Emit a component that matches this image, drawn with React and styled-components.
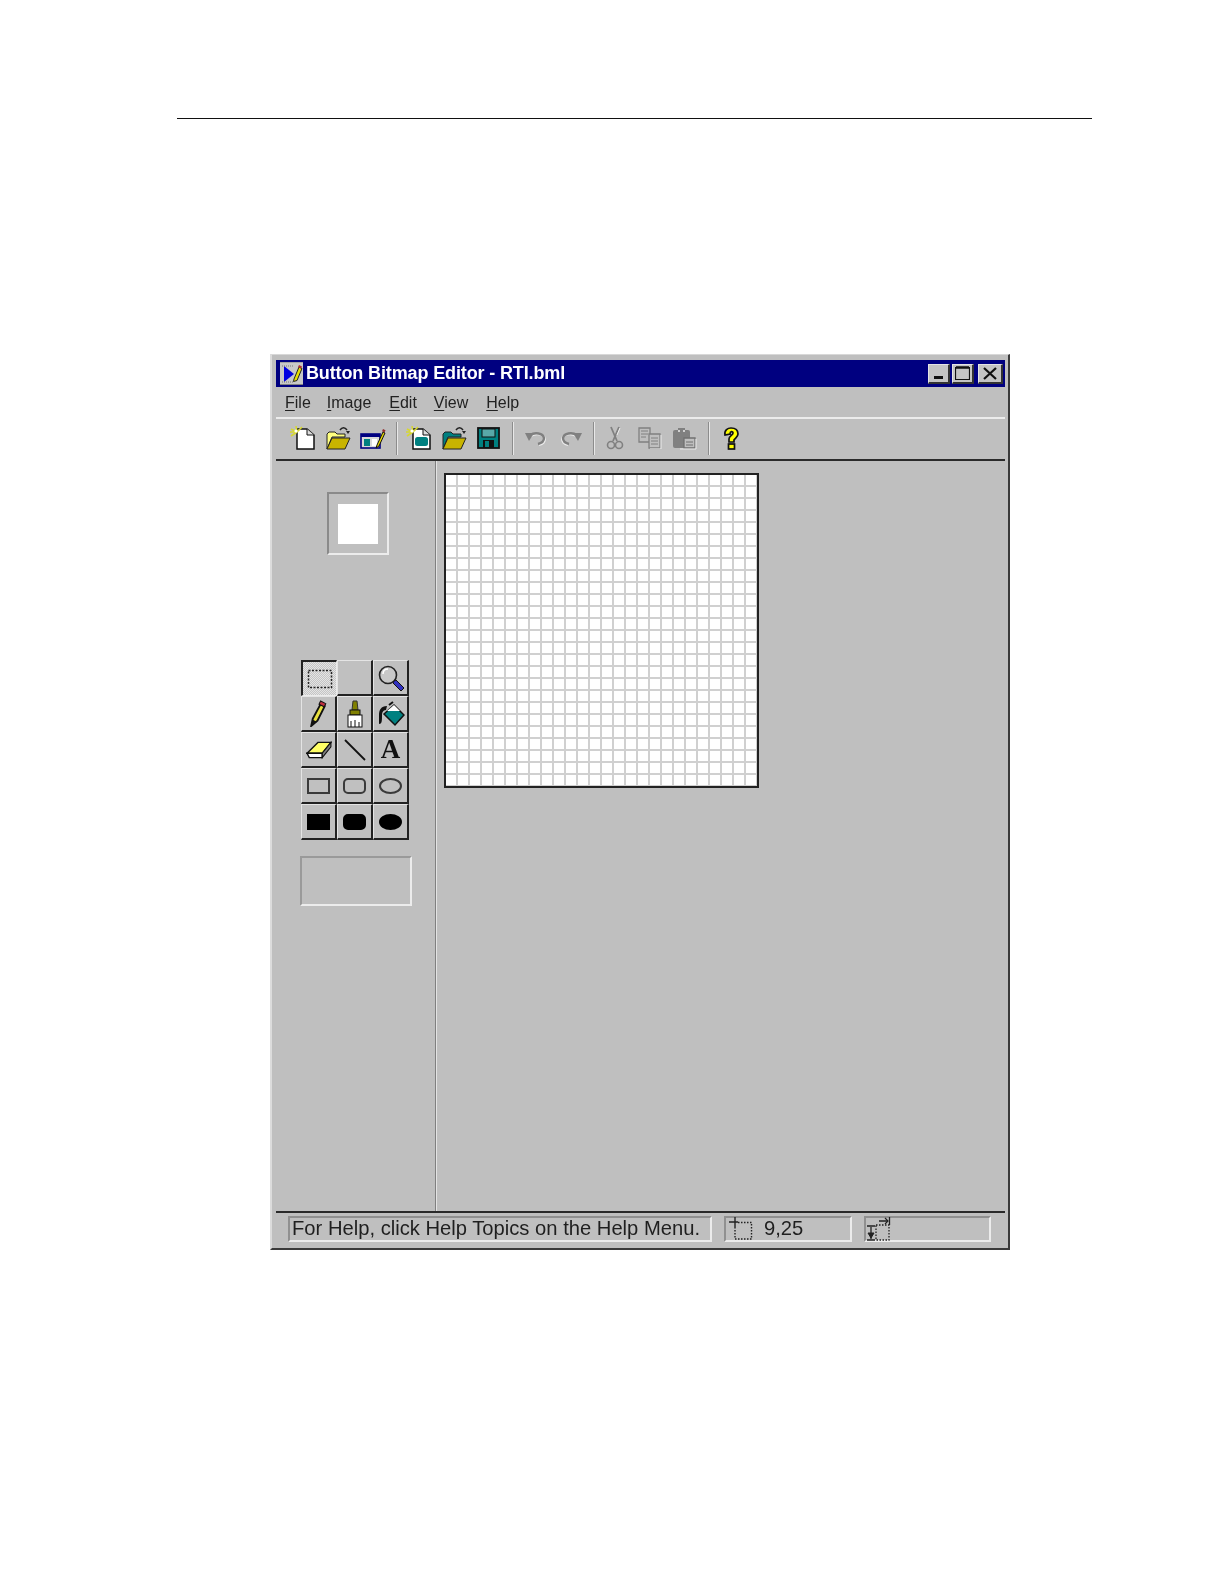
import React from "react";
import styled, { createGlobalStyle } from "styled-components";

const Global = createGlobalStyle`
  html, body { margin: 0; padding: 0; background: #ffffff; }
  body { font-family: "Liberation Sans", Arial, sans-serif; }
`;

const Page = styled.div`
  width: 1224px;
  height: 1584px;
  padding: 118px 0 0 177px;
  box-sizing: border-box;
  background: #fff;
`;
const Rule = styled.div`
  width: 915px;
  height: 1px;
  background: #111;
`;
const Win = styled.div`
  width: 740px;
  height: 896px;
  margin: 235px 0 0 93px;
  box-sizing: border-box;
  background: #bfbfbf;
  padding: 5px 3px 3px 4px;
  border-top: 1px solid #d8d8d8;
  border-left: 2px solid #dcdcdc;
  border-right: 2px solid #3a3a3a;
  border-bottom: 2px solid #3a3a3a;
  display: flex;
  flex-direction: column;
  filter: blur(0.35px);
`;
const TitleBar = styled.div`
  height: 27px;
  flex: none;
  background: #000080;
  display: flex;
  align-items: center;
  padding: 0 2px 0 4px;
  color: #fff;
`;
const TitleText = styled.span`
  font-size: 18px;
  font-weight: 700;
  letter-spacing: -0.13px;
  margin-left: 3px;
  flex: 1;
  white-space: nowrap;
`;
const WinBtn = styled.div`
  width: ${(p) => p.$w || 22}px;
  height: 20px;
  margin-left: ${(p) => p.$ml || 0}px;
  box-sizing: border-box;
  background: #c4c4c4;
  border-top: 1px solid #e4e4e4;
  border-left: 1px solid #e4e4e4;
  border-right: 2px solid #333;
  border-bottom: 2px solid #333;
  display: flex;
  align-items: center;
  justify-content: center;
`;
const MenuBar = styled.div`
  height: 30px;
  flex: none;
  display: flex;
  padding-left: 9px;
  align-items: flex-end;
  font-size: 16px;
  color: #222;
  box-sizing: border-box;
  padding-bottom: 5px;
`;
const MenuItem = styled.span`
  margin-right: ${(p) => p.$mr}px;
  white-space: nowrap;
  & u { text-underline-offset: 2px; }
`;
const Toolbar = styled.div`
  height: 42px;
  flex: none;
  box-sizing: border-box;
  border-top: 2px solid #ececec;
  padding: 0 0 0 10px;
  display: flex;
  align-items: flex-start;
`;
const ToolBtn = styled.div`
  width: 34.7px;
  height: 38px;
  flex: none;
  box-sizing: border-box;
  padding-left: ${(p) => p.$pl || 0}px;
  display: flex;
  align-items: center;
  justify-content: center;
`;
const ToolSep = styled.div`
  width: 2px;
  height: 33px;
  margin: 3px ${(p) => p.$mr ?? 4}px 0 ${(p) => p.$ml ?? 6}px;
  flex: none;
  background: linear-gradient(90deg, #8c8c8c 50%, #e8e8e8 50%);
`;
const Dark = styled.div`
  height: 2px;
  flex: none;
  background: #2a2a2a;
`;
const Main = styled.div`
  flex: 1;
  min-height: 0;
  display: flex;
`;
const Side = styled.div`
  width: 159px;
  flex: none;
  box-sizing: border-box;
  display: flex;
  flex-direction: column;
  align-items: flex-start;
  padding: 31px 0 0 25px;
`;
const Divider = styled.div`
  width: 2px;
  flex: none;
  background: linear-gradient(90deg, #808080 50%, #e4e4e4 50%);
`;
const Preview = styled.div`
  width: 62px;
  height: 63px;
  flex: none;
  margin-left: 26px;
  box-sizing: border-box;
  border-top: 2px solid #8a8a8a;
  border-left: 2px solid #8a8a8a;
  border-right: 2px solid #ececec;
  border-bottom: 2px solid #ececec;
  display: flex;
  align-items: center;
  justify-content: center;
`;
const PreviewSwatch = styled.div`
  width: 40px;
  height: 40px;
  background: #fff;
`;
const Palette = styled.div`
  margin-top: 105px;
  flex: none;
  display: grid;
  grid-template-columns: repeat(3, 36px);
  grid-auto-rows: 36px;
`;
const PalBtn = styled.div`
  box-sizing: border-box;
  display: flex;
  align-items: center;
  justify-content: center;
  background: ${(p) =>
    p.$on
      ? "repeating-conic-gradient(#e4e4e4 0 25%, #c4c4c4 0 50%) 0 0 / 2px 2px"
      : "#c0c0c0"};
  border-top: ${(p) => (p.$on ? "2px solid #222" : "1px solid #e4e4e4")};
  border-left: ${(p) => (p.$on ? "2px solid #222" : "1px solid #e4e4e4")};
  border-right: ${(p) => (p.$on ? "1px solid #ececec" : "2px solid #222")};
  border-bottom: ${(p) => (p.$on ? "1px solid #ececec" : "2px solid #222")};
`;
const OptBox = styled.div`
  margin-top: 16px;
  margin-left: -1px;
  flex: none;
  width: 112px;
  height: 50px;
  box-sizing: border-box;
  border-top: 2px solid #9a9a9a;
  border-left: 2px solid #9a9a9a;
  border-right: 2px solid #ececec;
  border-bottom: 2px solid #ececec;
`;
const Canvas = styled.div`
  flex: 1;
  padding: 12px 0 0 7px;
`;
const Grid = styled.div`
  width: 315px;
  height: 315px;
  box-sizing: border-box;
  border: 2px solid #222;
  background-color: #fff;
  background-image:
    linear-gradient(90deg, transparent 10px, #d0d0d0 10px, #d0d0d0 12px),
    linear-gradient(180deg, transparent 10px, #d0d0d0 10px, #d0d0d0 12px);
  background-size: 12px 12px;
`;
const Status = styled.div`
  height: 32px;
  flex: none;
  display: flex;
  gap: 12px;
  padding: 3px 0 0 12px;
  box-sizing: border-box;
`;
const Pane = styled.div`
  width: ${(p) => p.$w}px;
  height: 26px;
  box-sizing: border-box;
  flex: none;
  border-top: 2px solid #909090;
  border-left: 2px solid #909090;
  border-right: 2px solid #ececec;
  border-bottom: 2px solid #ececec;
  display: flex;
  align-items: center;
  padding-left: ${(p) => p.$pl ?? 2}px;
  padding-bottom: 1px;
  font-size: 20.2px;
  color: #1f1f1f;
  white-space: nowrap;
`;
const PaneText = styled.span`
  margin-left: ${(p) => p.$ml}px;
`;

const AppIcon = () => (
  <svg width="23" height="23" viewBox="0 0 23 23">
    <rect width="23" height="23" fill="#c8c8c8" />
    <path d="M0 0h23M0 22.500h23" stroke="#808080" fill="none" />
    <path d="M4 4v16l10-8z" fill="#0000e0" />
    <path d="M2 4h12M2 20h12" stroke="#777" strokeDasharray="1 1" />
    <path d="M14 17l5-12 3 1.500-5 12-3.500 1z" fill="#e8e000" stroke="#222" />
    <path d="M19 3l3 1.500-1 2-3-1.500z" fill="#b03030" />
  </svg>
);
const NewDoc = ({ teal }) => (
  <svg width="26" height="24" viewBox="0 0 26 24">
    <path d="M7 3h10l7 6v14H7z" fill="#fff" stroke="#111" strokeWidth="1.500" />
    <path d="M17 3v6h7" fill="#ddd" stroke="#111" />
    <path d="M1 3l6 3M6 0l1 6M12 1L7 6M1 10l6-4M0 6h7" stroke="#d8d830" strokeWidth="1.600" />
    <circle cx="6" cy="5" r="1.600" fill="#fff" />
    {teal && <rect x="9" y="11" width="13" height="9" rx="2.500" fill="#008080" />}
  </svg>
);
const OpenFolder = ({ teal }) => (
  <svg width="25" height="24" viewBox="0 0 25 24">
    <path d="M1 8l2-2h6l2 2h8v3H6l-5 12z" fill={teal ? "#008080" : "#ffff80"} stroke="#222" />
    <path d="M1 23l5-11h18l-5 11z" fill="#c8b400" stroke="#222" />
    <path d="M14 4c2-3 5-3 7 0" fill="none" stroke="#222" strokeWidth="1.500" />
    <path d="M20 5h4l-2 3z" fill="#222" />
  </svg>
);
const Props = () => (
  <svg width="26" height="24" viewBox="0 0 26 24">
    <rect x="1" y="8" width="19" height="14" fill="#d8d8d8" stroke="#000080" strokeWidth="1.600" />
    <rect x="1" y="8" width="19" height="3" fill="#000080" />
    <rect x="4" y="13" width="6" height="7" fill="#008080" />
    <rect x="12" y="13" width="5" height="7" fill="#fff" />
    <path d="M17 19l6-13 2 1-6 13-3 2z" fill="#e8d800" stroke="#111" />
    <path d="M23 3l2.500 1.200-1 2.300-2.500-1.200z" fill="#903030" />
  </svg>
);
const Save = () => (
  <svg width="23" height="22" viewBox="0 0 23 22">
    <rect x="1" y="1" width="21" height="20" fill="#008080" stroke="#111" strokeWidth="1.800" />
    <rect x="5" y="2" width="13" height="8" fill="#58a8a8" stroke="#111" />
    <rect x="6" y="13" width="11" height="8" fill="#111" />
    <rect x="8" y="14" width="4" height="6" fill="#008080" />
  </svg>
);
const Undo = ({ flip }) => (
  <svg width="22" height="16" viewBox="0 0 22 16" style={flip ? { transform: "scaleX(-1)" } : undefined}>
    <path d="M6 5c5-3 13-2 14 3 0 3-2 5-6 6" fill="none" stroke="#ececec" strokeWidth="2" transform="translate(1 1)" />
    <path d="M6 5c5-3 13-2 14 3 0 3-2 5-6 6" fill="none" stroke="#808080" strokeWidth="2.400" />
    <path d="M1 3h9l-5 8z" fill="#808080" />
  </svg>
);
const Cut = () => (
  <svg width="18" height="24" viewBox="0 0 18 24" fill="none">
    <path d="M5 1l6 14M13 1L7 15" stroke="#808080" strokeWidth="1.800" />
    <circle cx="5" cy="19" r="3.500" stroke="#808080" strokeWidth="1.600" />
    <circle cx="13" cy="19" r="3.500" stroke="#808080" strokeWidth="1.600" />
    <path d="M14 2l-3 7" stroke="#ececec" />
  </svg>
);
const Copy = () => (
  <svg width="24" height="22" viewBox="0 0 24 22" fill="none">
    <path d="M1 1h11v14H1z" stroke="#808080" strokeWidth="1.300" />
    <path d="M3 4h7M3 7h7M3 10h5" stroke="#808080" />
    <path d="M11 7h11v14H11z" fill="#bfbfbf" stroke="#808080" strokeWidth="1.300" />
    <path d="M13 11h7M13 14h7M13 17h7" stroke="#808080" />
    <path d="M23 8v14H12" stroke="#ececec" />
  </svg>
);
const Paste = () => (
  <svg width="25" height="23" viewBox="0 0 25 23">
    <rect x="1" y="3" width="17" height="18" rx="2" fill="#808080" />
    <path d="M6 1h7v4H6z" fill="#808080" />
    <path d="M6 4h2M11 4h2" stroke="#ececec" strokeWidth="1.500" />
    <path d="M12 11h11v10H12z" fill="#bfbfbf" stroke="#707070" strokeWidth="1.300" />
    <path d="M14 15h7M14 18h7" stroke="#707070" />
    <path d="M24 12v10H8" stroke="#ececec" fill="none" />
  </svg>
);
const HelpIcon = () => (
  <svg width="18" height="23" viewBox="0 0 18 23">
    <path
      d="M3 8C2 3 6 1 9 1c4 0 7 2 7 6 0 3-3 4-4 6v2H7v-3c0-3 4-4 4-6 0-2-3-2-3 1z"
      fill="#ffff00"
      stroke="#111"
      strokeWidth="1.700"
    />
    <rect x="6.500" y="17" width="6" height="5" fill="#ffff00" stroke="#111" strokeWidth="1.700" />
  </svg>
);

const Select = () => (
  <svg width="26" height="20" viewBox="0 0 26 20">
    <rect x="1.500" y="1.500" width="23" height="17" fill="none" stroke="#222" strokeWidth="1.500" strokeDasharray="2 1.500" />
  </svg>
);
const Magnifier = () => (
  <svg width="28" height="28" viewBox="0 0 28 28">
    <circle cx="11" cy="11" r="8.500" fill="#c8c8c8" stroke="#222" strokeWidth="1.600" />
    <path d="M6 10c0-3 2-5 5-5" stroke="#fff" fill="none" strokeWidth="1.500" />
    <path d="M17 17l2-1 8 8-3 3-8-8z" fill="#3030c0" stroke="#111" />
  </svg>
);
const Pencil = () => (
  <svg width="17" height="27" viewBox="0 0 16 26">
    <path d="M1 25l1.500-7L10 4l4 2-7 14z" fill="#e8e040" stroke="#111" strokeWidth="1.800" />
    <path d="M1 25l1.500-6 4 2z" fill="#111" />
    <path d="M10 1l5 2.500-1.500 3-5-2.500z" fill="#c03040" stroke="#111" />
  </svg>
);
const Brush = () => (
  <svg width="16" height="28" viewBox="0 0 16 28">
    <path d="M6 1h4l1 9H5z" fill="#808000" stroke="#333" />
    <rect x="3" y="10" width="10" height="5" fill="#808000" stroke="#111" />
    <rect x="1" y="15" width="14" height="12" fill="#fff" stroke="#111" />
    <path d="M4 21v6M8 20v7M12 22v5" stroke="#111" />
  </svg>
);
const Fill = () => (
  <svg width="28" height="26" viewBox="0 0 28 26">
    <path d="M10 5C4 5 2 9 2 14v9c3 0 3-3 3-9 0-2 1-5 4-5z" fill="#111" />
    <path d="M7 13l10-9 10 10-9 10z" fill="#008080" stroke="#111" strokeWidth="1.500" />
    <path d="M10 10l7-6 6 6z" fill="#fff" />
    <path d="M12 4l4-3" stroke="#111" strokeWidth="2" />
  </svg>
);
const Eraser = () => (
  <svg width="26" height="20" viewBox="0 0 24 18">
    <path d="M1 12L11 2h12l-8 10z" fill="#ffff66" stroke="#111" strokeWidth="1.300" />
    <path d="M1 12h14v4H3z" fill="#fff" stroke="#111" strokeWidth="1.300" />
    <path d="M15 12l8-10v4l-8 10z" fill="#808080" stroke="#111" />
  </svg>
);
const LineTool = () => (
  <svg width="24" height="24" viewBox="0 0 24 24">
    <path d="M2 2l20 20" stroke="#111" strokeWidth="1.800" />
  </svg>
);
const TextA = styled.span`
  font-family: "Liberation Serif", "Times New Roman", serif;
  font-weight: 700;
  font-size: 27px;
  line-height: 1;
  color: #111;
`;
const Shape = styled.div`
  width: 23px;
  height: 16px;
  box-sizing: border-box;
  border: 2px solid ${(p) => (p.$fill ? "#000" : "#3a3a3a")};
  border-radius: ${(p) => p.$r || "0"};
  background: ${(p) => (p.$fill ? "#000" : "transparent")};
`;

const Corner = () => (
  <svg width="26" height="24" viewBox="0 0 26 24" fill="none" stroke="#222">
    <path d="M2 5h9M8 0v10" strokeWidth="1.400" />
    <path d="M11 5.500h13.500V22H8V10" strokeDasharray="1.500 1.500" strokeWidth="1.400" />
  </svg>
);
const SizeIcon = () => (
  <svg width="26" height="24" viewBox="0 0 26 24" fill="none" stroke="#222">
    <path d="M10 8h13v15H10z" strokeDasharray="1.500 1.500" strokeWidth="1.300" />
    <path d="M13 4h9M23.500 0v8" strokeWidth="1.300" />
    <path d="M19 1l3 3-3 3" strokeWidth="1.200" />
    <path d="M1 9h8M5 10v12M1 23h8" strokeWidth="1.300" />
    <path d="M2 16l3 5 3-5z" fill="#222" />
  </svg>
);

const Menu = [
  ["F", "ile", 16],
  ["I", "mage", 18],
  ["E", "dit", 17],
  ["V", "iew", 18],
  ["H", "elp", 0],
];

export default function App() {
  return (
    <Page>
      <Global />
      <Rule />
      <Win>
        <TitleBar>
          <AppIcon />
          <TitleText>Button Bitmap Editor - RTI.bml</TitleText>
          <WinBtn>
            <svg width="12" height="12" viewBox="0 0 12 12">
              <rect x="1" y="9" width="9" height="3" fill="#111" />
            </svg>
          </WinBtn>
          <WinBtn $ml={2}>
            <svg width="15" height="14" viewBox="0 0 15 14" fill="none" stroke="#111">
              <path d="M0.500 1v12.500h14V1" strokeWidth="1.200" />
              <path d="M1 1.500h13" strokeWidth="2.500" />
            </svg>
          </WinBtn>
          <WinBtn $ml={4} $w={25}>
            <svg width="14" height="13" viewBox="0 0 14 13" stroke="#111" strokeWidth="2.200">
              <path d="M1 1l12 11M13 1L1 12" />
            </svg>
          </WinBtn>
        </TitleBar>
        <MenuBar>
          {Menu.map(([a, b, mr]) => (
            <MenuItem key={a} $mr={mr}>
              <u>{a}</u>
              {b}
            </MenuItem>
          ))}
        </MenuBar>
        <Toolbar>
          <ToolBtn><NewDoc /></ToolBtn>
          <ToolBtn><OpenFolder /></ToolBtn>
          <ToolBtn><Props /></ToolBtn>
          <ToolSep />
          <ToolBtn><NewDoc teal /></ToolBtn>
          <ToolBtn><OpenFolder teal /></ToolBtn>
          <ToolBtn><Save /></ToolBtn>
          <ToolSep />
          <ToolBtn><Undo /></ToolBtn>
          <ToolBtn $pl={4}><Undo flip /></ToolBtn>
          <ToolSep $ml={5} $mr={3} />
          <ToolBtn><Cut /></ToolBtn>
          <ToolBtn><Copy /></ToolBtn>
          <ToolBtn><Paste /></ToolBtn>
          <ToolSep />
          <ToolBtn><HelpIcon /></ToolBtn>
        </Toolbar>
        <Dark />
        <Main>
          <Side>
            <Preview><PreviewSwatch /></Preview>
            <Palette>
              <PalBtn $on><Select /></PalBtn>
              <PalBtn />
              <PalBtn><Magnifier /></PalBtn>
              <PalBtn><Pencil /></PalBtn>
              <PalBtn><Brush /></PalBtn>
              <PalBtn><Fill /></PalBtn>
              <PalBtn><Eraser /></PalBtn>
              <PalBtn><LineTool /></PalBtn>
              <PalBtn><TextA>A</TextA></PalBtn>
              <PalBtn><Shape /></PalBtn>
              <PalBtn><Shape $r="5px" /></PalBtn>
              <PalBtn><Shape $r="50%" /></PalBtn>
              <PalBtn><Shape $fill /></PalBtn>
              <PalBtn><Shape $fill $r="5px" /></PalBtn>
              <PalBtn><Shape $fill $r="50%" /></PalBtn>
            </Palette>
            <OptBox />
          </Side>
          <Divider />
          <Canvas>
            <Grid />
          </Canvas>
        </Main>
        <Dark />
        <Status>
          <Pane $w={424}>For Help, click Help Topics on the Help Menu.</Pane>
          <Pane $w={128} $pl={1}>
            <Corner />
            <PaneText $ml={11}>9,25</PaneText>
          </Pane>
          <Pane $w={127} $pl={0}>
            <SizeIcon />
          </Pane>
        </Status>
      </Win>
    </Page>
  );
}
